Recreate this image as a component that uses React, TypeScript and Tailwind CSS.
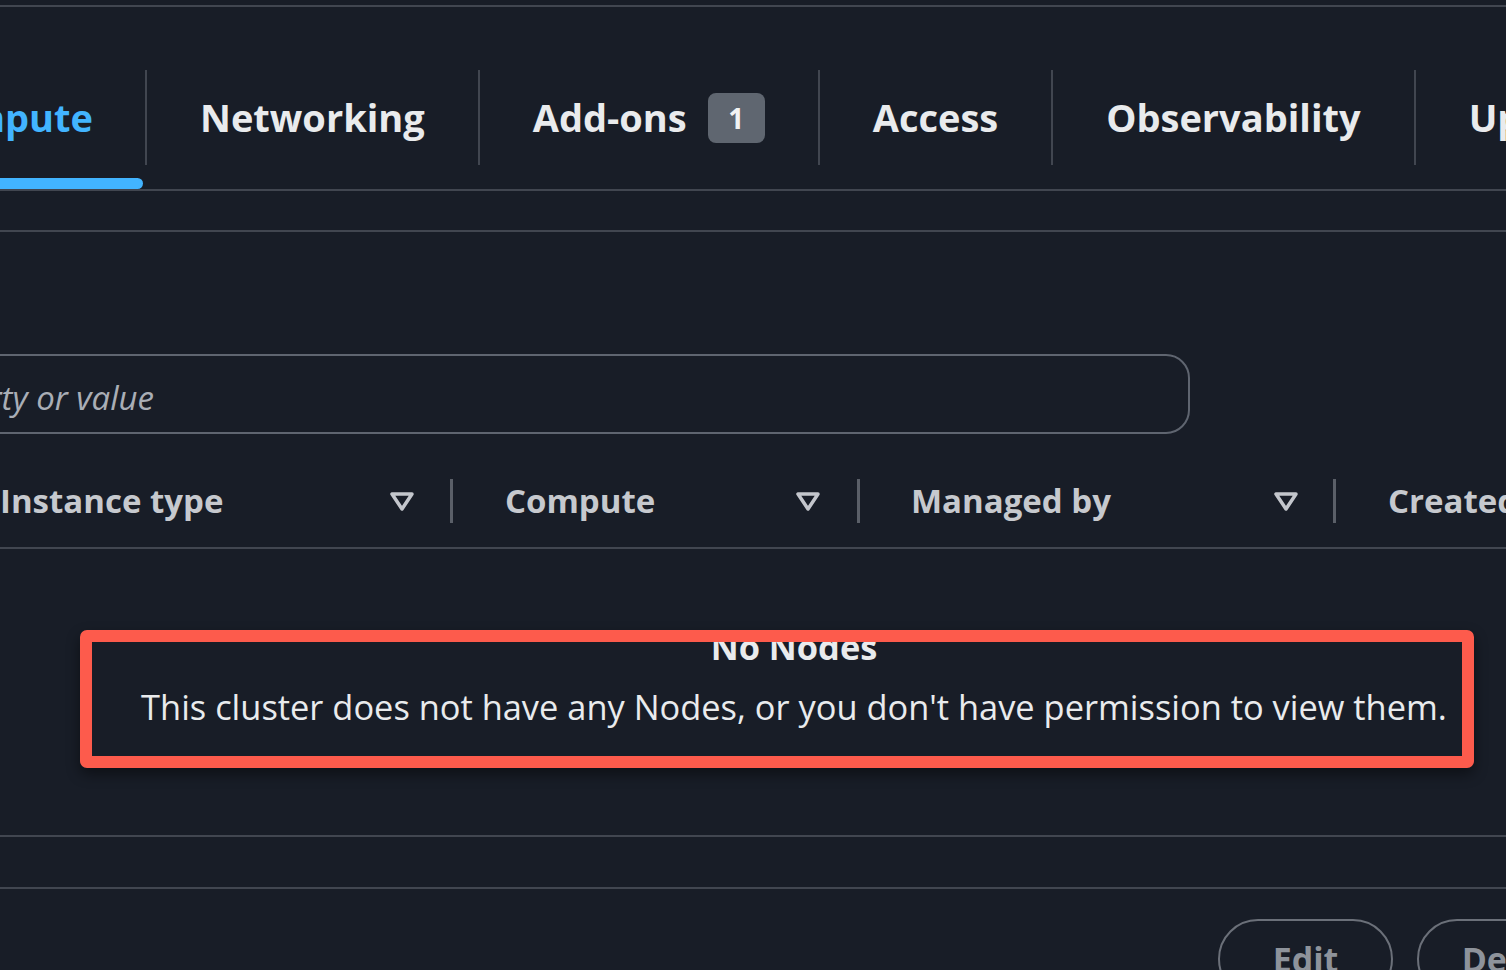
import React from "react";

const font = "font-['Open_Sans','Noto_Sans',sans-serif]";

function SortIcon() {
  return (
    <svg width="26" height="21" viewBox="0 0 26 21" className="shrink-0">
      <polygon
        points="3,3 23,3 13,18"
        fill="none"
        stroke="#c3c6cc"
        strokeWidth="3.5"
        strokeLinejoin="round"
      />
    </svg>
  );
}

function Tab({ label, badge }: { label: string; badge?: string }) {
  return (
    <div className="flex shrink-0 flex-col">
      <div className="flex h-[95px] items-center gap-[21px] border-r-2 border-[#414650] px-[53px] whitespace-nowrap">
        <span className="text-[38px] font-bold text-[#e9ebed]">{label}</span>
        {badge && (
          <span className="flex h-[50px] w-[57px] items-center justify-center rounded-[8px] bg-[#5f6670] text-[28px] font-bold text-[#f2f3f3]">
            {badge}
          </span>
        )}
      </div>
      <div className="h-[24px]" />
    </div>
  );
}

export default function App() {
  return (
    <div className={`relative h-[970px] w-[1506px] overflow-hidden bg-[#181d27] ${font}`}>
      <div className="mt-[5px] h-[2px] bg-[#414650]" />

      {/* tabs */}
      <div className="mt-[63px] flex">
        <div className="flex shrink-0 flex-col">
          <div className="flex h-[95px] w-[147px] items-center justify-end border-r-2 border-[#414650] pr-[52px] whitespace-nowrap">
            <span className="text-[38px] font-bold text-[#42b4ff]">Compute</span>
          </div>
          <div className="h-[13px]" />
          <div className="h-[11px] w-[143px] rounded-r-full bg-[#42b4ff]" />
        </div>
        <Tab label="Networking" />
        <Tab label="Add-ons" badge="1" />
        <Tab label="Access" />
        <Tab label="Observability" />
        <Tab label="Update history" />
      </div>
      <div className="h-[2px] bg-[#414650]" />
      <div className="mt-[39px] h-[2px] bg-[#414650]" />

      {/* filter */}
      <div className="mt-[122px] -ml-[40px] flex h-[80px] w-[1230px] items-center rounded-[24px] border-2 border-[#5f6570] pt-[8px]">
        <div className="flex w-[192px] shrink-0 justify-end whitespace-nowrap">
          <span className="text-[33px] italic text-[#a9aeb6]">Filter Nodes by property or value</span>
        </div>
      </div>

      {/* table header */}
      <div className="mt-[45px] flex h-[44px] items-center whitespace-nowrap text-[33px] font-bold text-[#c6c9ce]">
        <div className="flex w-[450px] shrink-0 items-center pr-[35px]">
          <span className="flex-1">Instance type</span>
          <SortIcon />
        </div>
        <div className="h-[44px] w-[3px] shrink-0 bg-[#5a5f68]" />
        <div className="flex w-[404px] shrink-0 items-center pl-[52px] pr-[36px]">
          <span className="flex-1">Compute</span>
          <SortIcon />
        </div>
        <div className="h-[44px] w-[3px] shrink-0 bg-[#5a5f68]" />
        <div className="flex w-[473px] shrink-0 items-center pl-[51px] pr-[34px]">
          <span className="flex-1">Managed by</span>
          <SortIcon />
        </div>
        <div className="h-[44px] w-[3px] shrink-0 bg-[#5a5f68]" />
        <div className="shrink-0 pl-[52px]">Created</div>
      </div>
      <div className="mt-[24px] h-[2px] bg-[#414650]" />

      {/* empty state */}
      <div className="mt-[75px] flex w-[1588px] flex-col items-center whitespace-nowrap text-[34.4px] text-[#e9ebed]">
        <span className="font-bold leading-[46px]">No Nodes</span>
        <span className="mt-[14px] leading-[46px]">
          This cluster does not have any Nodes, or you don't have permission to view them.
        </span>
      </div>

      <div className="mt-[105px] h-[2px] bg-[#414650]" />
      <div className="mt-[50px] h-[2px] bg-[#414650]" />

      {/* actions */}
      <div className="mt-[30px] flex gap-[24px] pl-[1218px]">
        <button className="flex h-[80px] w-[175px] shrink-0 items-center justify-center rounded-full border-2 border-[#6b7079] text-[34px] font-bold text-[#8e939b]">
          Edit
        </button>
        <button className="flex h-[80px] w-[200px] shrink-0 items-center justify-center rounded-full border-2 border-[#6b7079] text-[34px] font-bold text-[#8e939b]">
          Delete
        </button>
      </div>

      {/* highlight annotation */}
      <div className="absolute left-[80px] top-[630px] h-[138px] w-[1394px] rounded-[7px] border-[12px] border-[#fd5b4c] shadow-[0_6px_14px_rgba(0,0,0,0.45)]" />
    </div>
  );
}
